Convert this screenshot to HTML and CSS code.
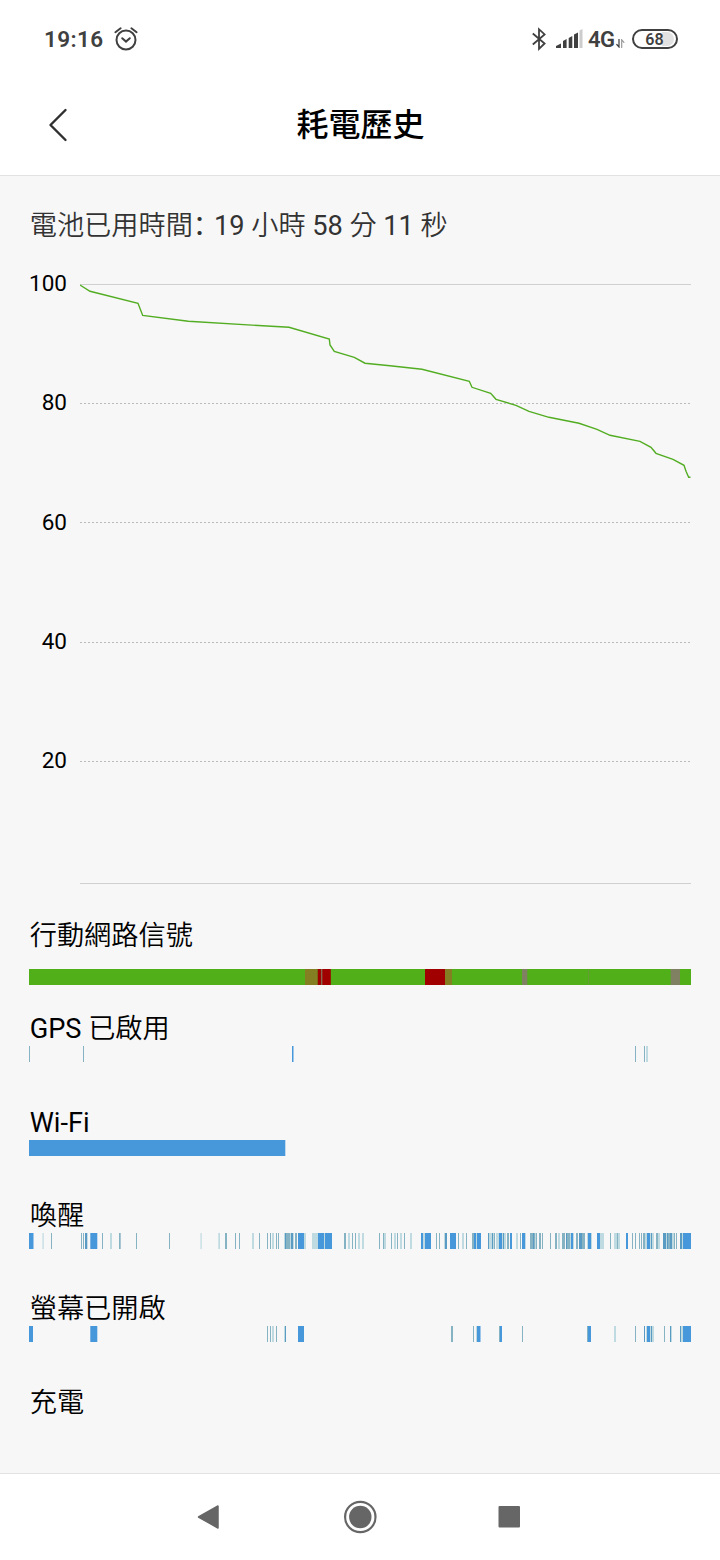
FILE: index.html
```html
<!DOCTYPE html>
<html lang="zh-Hant">
<head>
  <meta charset="UTF-8">
  <title>耗電歷史</title>
  <link rel="stylesheet" href="styles.css">
</head>
<body>

  <div class="status-bar">
    <span class="clock">19:16</span>
    <svg class="alarm" width="26" height="26" viewBox="0 0 26 26">
      <circle cx="13" cy="14" r="9.5"/>
      <path d="M9.2 12.2l3.8 3.4 3.8-3.4M2.4 6.2L7.6 2.3M23.6 6.2l-5.2-3.9"/>
    </svg>
    <div class="status-right">
      <svg class="bluetooth" width="16" height="24" viewBox="0 0 16 24">
        <path d="M1.8 6.5L13.6 16.5L8 21.8V2.2L13.6 7.4L1.8 17.5"/>
      </svg>
      <svg class="signal" width="28" height="20" viewBox="0 0 28 20">
        <path class="on" d="M0 19v-2l5-2.500v4.500zM7 19v-7l3.600-2v9zM12.700 19v-10l3.600-2v12zM18 19V5.500l4-2V19z"/>
        <path class="off" d="M23.500 19V1.500l3-1.500V19z"/>
      </svg>
      <span class="network">4G</span>
      <svg class="arrows" width="9" height="9" viewBox="0 0 9 9">
        <path d="M3 0v8L.8 5.500"/>
        <path class="up" d="M5.700 8.500V.8l2.200 2.500"/>
      </svg>
      <div class="battery"><span>68</span></div>
    </div>
  </div>

  <header>
    <svg class="back" width="22" height="34" viewBox="0 0 22 34">
      <path d="M18.500 2L3.500 17l15 15"/>
    </svg>
    <h1>耗電歷史</h1>
  </header>

  <main>
    <p class="used">電池已用時間<span class="colon" lang="zh-CN">：</span><b>19</b> 小時 <b>58</b> 分 <b>11</b> 秒</p>

    <div class="chart">
      <div class="labels">
        <span>100</span>
        <span>80</span>
        <span>60</span>
        <span>40</span>
        <span>20</span>
      </div>
      <svg class="plot" width="611" height="602" viewBox="80 283 611 602">
        <path class="edge" d="M80 284.500H691M80 883.500H691"/>
        <path class="grid" d="M80 403.500H691M80 522.500H691M80 642.500H691M80 761.500H691"/>
        <polyline class="level" points="80,285 90,291.300 138,303.300 142.700,315.400 188.300,321.300 289,327.300 329.300,339 330,345 334.300,351.300 354.300,357.300 365,363.200 390,365.800 422,369.300 469.300,381.300 472,387.300 490.700,393.300 496,399.300 516,405.300 529,411.300 549,417.300 579,423.300 597,429.300 610,435.300 640,441.300 651,447.300 656,453.300 673,459.300 684,465.300 686,471.300 688.700,477.300 690.500,477.300"/>
      </svg>
    </div>

    <section class="signal-row">
      <h2>行動網路信號</h2>
      <svg class="bar" data-row="signal" width="662" height="16" viewBox="29 0 662 16"></svg>
    </section>
    <section>
      <h2><b>GPS</b> 已啟用</h2>
      <svg class="bar" data-row="gps" width="662" height="16" viewBox="29 0 662 16"></svg>
    </section>
    <section>
      <h2><b>Wi-Fi</b></h2>
      <svg class="bar" data-row="wifi" width="662" height="16" viewBox="29 0 662 16"></svg>
    </section>
    <section>
      <h2>喚醒</h2>
      <svg class="bar" data-row="wake" width="662" height="16" viewBox="29 0 662 16"></svg>
    </section>
    <section>
      <h2>螢幕已開啟</h2>
      <svg class="bar" data-row="screen" width="662" height="16" viewBox="29 0 662 16"></svg>
    </section>
    <section>
      <h2>充電</h2>
    </section>
  </main>

  <nav>
    <svg width="360" height="40" viewBox="180 0 360 40">
      <path d="M198.500 20L218 9v22z" stroke-width="1.500" stroke-linejoin="round"/>
      <circle class="ring" cx="360.300" cy="20" r="15.200"/>
      <circle cx="360.300" cy="20" r="11.200"/>
      <rect x="498.500" y="9" width="21.500" height="21.500" rx="1"/>
    </svg>
  </nav>

  <script src="history.js"></script>
</body>
</html>
```
FILE: styles.css
```css
* {
  box-sizing: border-box;
}

body {
  margin: 0;
  height: 1560px;
  display: flex;
  flex-direction: column;
  overflow: hidden;
  background-color: #f7f7f7;
  color: #000;
  font-family: Roboto, "Noto Sans CJK TC", sans-serif;
}

svg {
  display: block;
  flex-shrink: 0;
}

.status-bar,
header,
nav {
  flex-shrink: 0;
}

.status-bar {
  height: 76px;
  padding: 2px 42px 0 44px;
  display: flex;
  align-items: center;
  background-color: #fff;
  color: #404040;
}

.clock {
  width: 69px;
  font-size: 22.5px;
  font-weight: 600;
  letter-spacing: 0.4px;
}

.alarm,
.bluetooth,
.arrows {
  fill: none;
  stroke: #404040;
  stroke-width: 2;
  stroke-linecap: round;
}

.alarm {
  margin-top: -1px;
}

.status-right {
  margin-left: auto;
  display: flex;
  align-items: center;
}

.bluetooth {
  margin: -1px 9px 0 0;
  stroke-width: 1.8;
  stroke-linecap: butt;
}

.signal {
  margin-right: 4px;
}

.signal .on {
  fill: #404040;
}

.signal .off {
  fill: #ccc;
}

.network {
  width: 26px;
  font-size: 22px;
  font-weight: 600;
  letter-spacing: -0.5px;
}

.arrows {
  margin: 9px 7px 0 2px;
  stroke-width: 1.2;
}

.arrows .up {
  stroke: #999;
}

.battery {
  width: 46px;
  height: 20px;
  margin-top: -1px;
  padding: 1px 2px;
  border: 2px solid #404040;
  border-radius: 10px;
}

.battery span {
  display: block;
  height: 14px;
  padding-right: 1px;
  border-radius: 7px;
  background: linear-gradient(to right, #fff 68%, #e2e2e2 68%);
  font-size: 16px;
  line-height: 15px;
  font-weight: 600;
  text-align: center;
}

header {
  height: 100px;
  padding: 0 0 2px 47px;
  display: grid;
  grid-template-columns: 22px 1fr 68px;
  align-items: center;
  background-color: #fff;
  border-bottom: 1px solid #e2e2e2;
}

.back {
  fill: none;
  stroke: #303030;
  stroke-width: 2.4;
  stroke-linecap: round;
  stroke-linejoin: round;
}

h1 {
  margin: 0;
  font-size: 32px;
  font-weight: 500;
  line-height: 40px;
  text-align: center;
}

main {
  flex: 1;
  min-height: 0;
  padding: 27px 29px 0;
}

.used,
h2 {
  padding-left: 0.7px;
  font-size: 27.2px;
  font-weight: 350;
}

b {
  font-weight: 400;
}

.used {
  margin: 0;
  height: 42px;
  line-height: 40px;
  color: #333;
  white-space: nowrap;
}

.colon {
  font-family: "Noto Sans CJK SC", sans-serif;
  font-weight: 400;
  letter-spacing: -6px;
}

.chart {
  height: 640px;
  padding-top: 38px;
  display: flex;
  gap: 13px;
}

.labels {
  width: 38px;
  margin-top: -59px;
  font-size: 22.5px;
  line-height: 119.3px;
  text-align: right;
}

.labels span {
  display: block;
}

.plot path {
  stroke: #d0d0d0;
}

.plot .grid {
  stroke: #bbb;
  stroke-dasharray: 2 2;
}

.level {
  fill: none;
  stroke: #52ad22;
  stroke-width: 1.4;
}

section {
  height: 93.4px;
  padding-top: 3px;
}

h2 {
  margin: 0;
  line-height: 33px;
}

.signal-row {
  height: 125.2px;
  padding-top: 34.5px;
}

.signal-row .bar {
  margin-top: 16.5px;
}

nav {
  height: 87px;
  display: flex;
  justify-content: center;
  align-items: center;
  background-color: #fff;
  border-top: 1px solid #e2e2e2;
}

nav svg {
  fill: #666;
  stroke: none;
}

nav path {
  stroke: #666;
}

nav .ring {
  fill: none;
  stroke: #666;
  stroke-width: 2.2;
}
```
FILE: history.js
```js
const colors = {
  s: "#4798db",
  m: "#5a9bc4",
  t: "#86b3c4",
  l: "#bfdae0",
  green: "#51af19",
  olive: "#847f22",
  red: "#a00000",
  gray: "#808062"
};

// each entry: start, end, colour
const rows = {
  signal: [
    [29, 691, "green"], [305, 317.7, "olive"], [317.7, 330.8, "red"],
    [321.2, 322.3, "gray"], [425, 445, "red"], [445, 452, "olive"],
    [522, 527.3, "gray"], [588, 588.4, "gray"], [670.7, 680, "gray"]
  ],
  gps: [
    [29, 30, "t"], [83, 84, "t"], [292, 293.5, "s"],
    [635, 636, "t"], [644, 645, "t"], [646, 648, "l"]
  ],
  wifi: [[29, 285.3, "s"]],
  wake: [
    [29, 33.5, "s"], [42.5, 43.7, "l"], [51, 52, "t"], [81, 82, "t"],
    [83, 84, "t"], [85, 87.3, "m"], [90.3, 97.3, "s"], [102, 103, "t"],
    [110, 112, "l"], [119, 120.7, "t"], [136, 137, "t"], [169, 170, "t"],
    [200.5, 201.7, "l"], [218.3, 220, "l"], [225, 227, "t"], [235, 236, "t"],
    [239, 240, "t"], [252, 254, "l"], [259, 260, "t"], [267, 268, "t"],
    [270, 271, "t"], [272, 274, "l"], [276, 277, "t"], [278, 279, "t"],
    [284, 285, "l"], [285, 286, "m"], [286, 290, "t"], [290, 291, "l"],
    [291, 293, "m"], [293, 294, "l"], [295, 297, "t"], [298, 304, "s"],
    [304, 306, "l"], [312, 318, "l"], [318, 324, "s"], [324, 325, "l"],
    [325, 332, "s"], [344, 346, "t"], [348, 350, "l"], [352, 353, "t"],
    [355, 356, "t"], [358, 360, "l"], [362, 364, "l"], [379, 380, "t"],
    [383, 384, "t"], [384, 386, "l"], [391, 392, "t"], [394, 396, "l"],
    [397, 398, "t"], [400, 402, "l"], [404, 405, "t"], [410, 412, "l"],
    [421, 423, "s"], [423, 425, "l"], [425, 431, "s"], [436, 437, "t"],
    [439, 440, "t"], [444, 445, "l"], [445, 447, "m"], [450, 456, "s"],
    [458, 459, "t"], [462, 464, "l"], [466, 467, "t"], [472, 474, "t"],
    [474, 476, "s"], [476, 477, "l"], [477, 481, "s"], [488, 489, "m"],
    [489, 492, "l"], [492, 493, "m"], [493, 494, "l"], [494, 495, "t"],
    [496, 499, "l"], [499, 502, "s"], [502, 503, "l"], [503, 504, "m"],
    [504, 506, "l"], [507, 509, "t"], [510, 512, "s"], [516, 518, "l"],
    [520, 521, "t"], [522, 525.3, "s"], [525.3, 526, "l"], [530, 533, "t"],
    [533, 534, "m"], [534, 535, "t"], [535, 536, "l"], [536, 537, "t"],
    [539, 541, "t"], [542, 543, "t"], [550, 551, "t"], [555, 557, "t"],
    [558, 560, "l"], [562, 565, "t"], [566, 567, "m"], [567, 570, "t"],
    [570, 571, "l"], [571, 573, "s"], [573, 574, "l"], [576, 578, "t"],
    [579, 582, "m"], [582, 585, "t"], [587, 588, "l"], [588, 591, "s"],
    [591, 592, "l"], [597, 600, "s"], [600, 604, "l"], [610, 611, "t"],
    [614, 617, "l"], [617, 618, "t"], [618, 620, "l"], [626, 628, "s"],
    [632, 633, "t"], [635, 636, "t"], [639, 640, "t"], [641, 642, "t"],
    [643, 645, "t"], [645, 647, "l"], [647, 650, "s"], [650, 651, "l"],
    [651, 652, "m"], [652, 654, "l"], [656, 658, "t"], [658, 660, "l"],
    [663, 666, "m"], [666, 667, "l"], [667, 668, "m"], [668, 670, "t"],
    [670, 672, "m"], [672, 674, "l"], [674, 675, "t"], [676, 677, "t"],
    [680, 682, "m"], [682, 683, "l"], [683, 691, "s"]
  ],
  screen: [
    [29, 33, "s"], [90.3, 97.3, "s"], [267, 268, "t"], [270, 271, "t"],
    [272, 274, "l"], [276, 277, "t"], [284, 285, "l"], [285, 286, "m"],
    [298, 304, "s"], [451, 453, "t"], [473, 474, "t"], [476, 477, "l"],
    [477, 480.5, "s"], [499, 500, "t"], [500, 502, "s"], [522, 523, "t"],
    [587, 588, "t"], [588, 591, "s"], [614, 616, "l"], [635, 636, "t"],
    [644, 645, "m"], [646, 647, "l"], [647, 650, "s"], [650, 651, "l"],
    [651, 652, "m"], [652, 654, "l"], [664, 665, "t"], [670, 671, "m"],
    [671, 672, "l"], [680, 681, "m"], [681, 683, "l"], [683, 691, "s"]
  ]
};

document.querySelectorAll(".bar").forEach(function (bar) {
  rows[bar.dataset.row].forEach(function ([start, end, color]) {
    const rect = document.createElementNS("http://www.w3.org/2000/svg", "rect");
    rect.setAttribute("x", start);
    rect.setAttribute("width", end - start);
    rect.setAttribute("height", 16);
    rect.setAttribute("fill", colors[color]);
    bar.appendChild(rect);
  });
});
```
